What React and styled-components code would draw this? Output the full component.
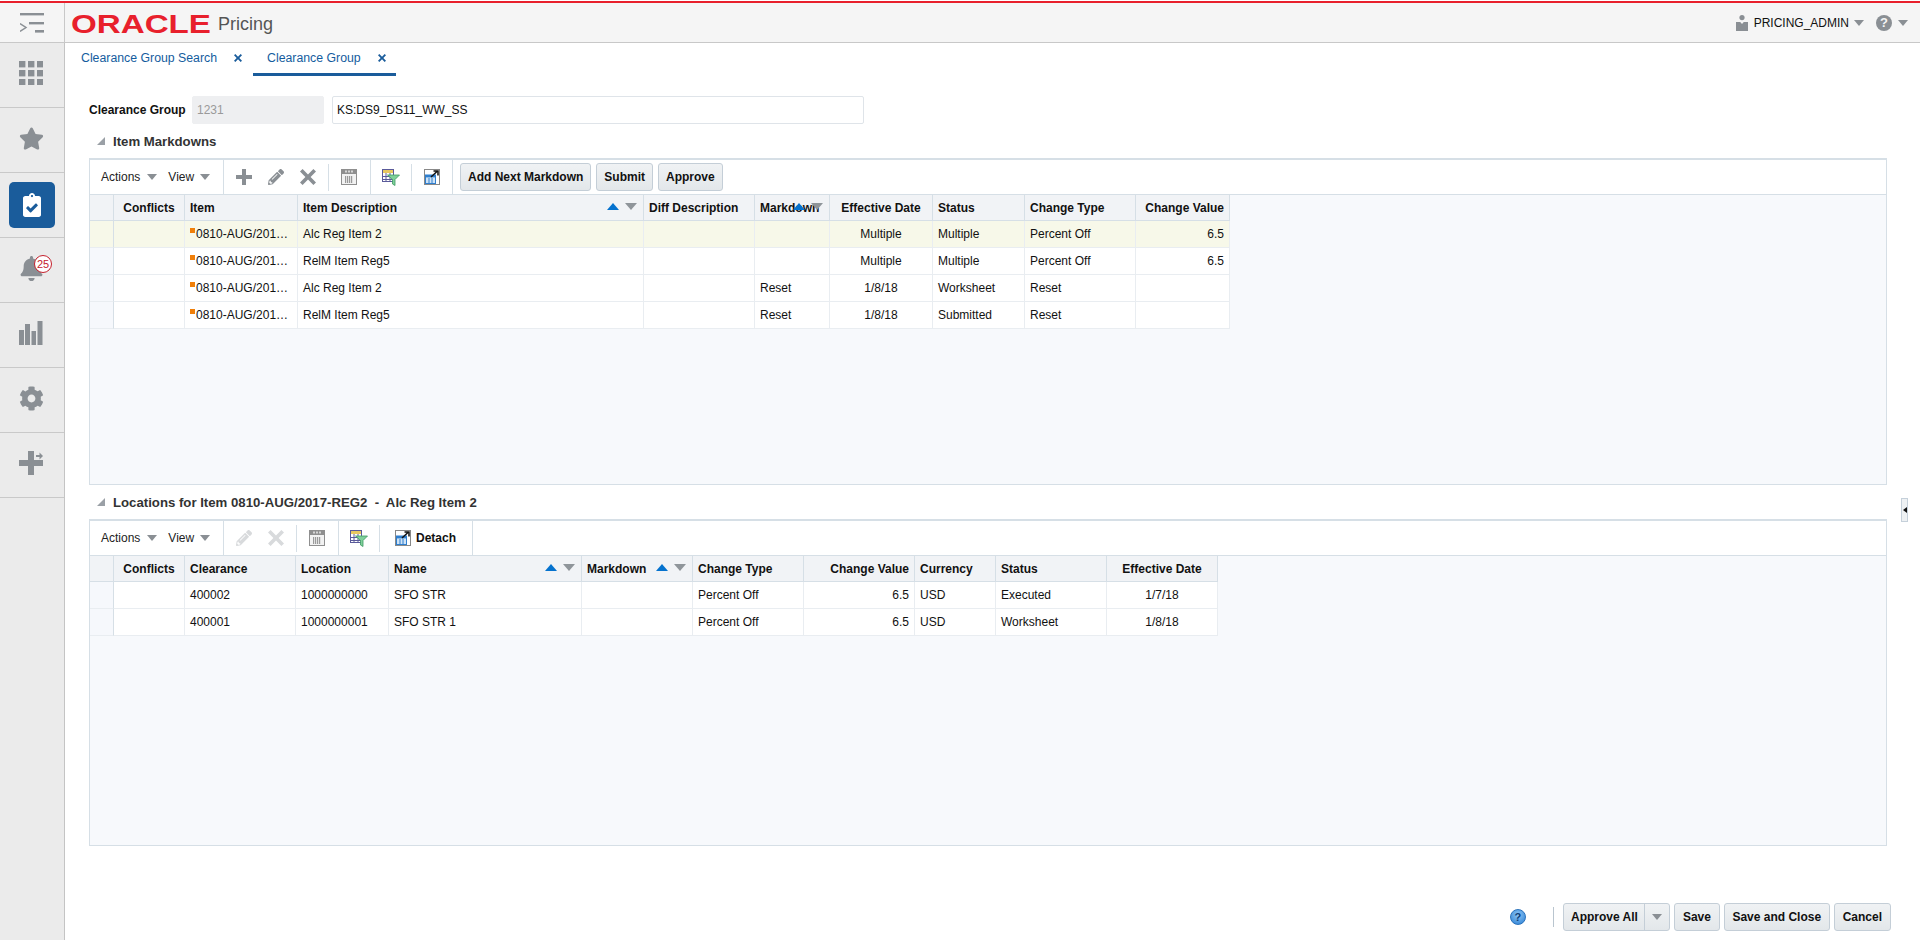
import React from "react";
import styled, { createGlobalStyle } from "styled-components";
import { FaStar, FaBell, FaCog, FaClipboardCheck, FaPencilAlt } from "react-icons/fa";

const GREY = "#8a8f94";

const GlobalStyle = createGlobalStyle`
  html, body { margin: 0; padding: 0; height: 100%; overflow: hidden; background: #fff; }
  body { font-family: "Liberation Sans", Arial, sans-serif; font-size: 12px; color: #111; }
`;

// ---- icons ----
const MenuIcon = () => (
  <svg width="24" height="20" viewBox="0 0 24 20" fill={GREY}>
    <rect x="0" y="0" width="24" height="2.4" />
    <rect x="9" y="9" width="15" height="2.4" />
    <rect x="15" y="17" width="9" height="2.6" />
    <path d="M0 10.5 L6 14.5 L0 18.5" fill="none" stroke={GREY} strokeWidth="1.5" />
  </svg>
);

const UserIcon = () => (
  <svg width="12" height="16" viewBox="0 0 12 16" fill={GREY}>
    <circle cx="6" cy="2.6" r="2.6" />
    <path d="M0 7 H4.2 L6 9 L7.8 7 H12 V16 H0 Z" />
  </svg>
);

const GridIcon = () => (
  <svg width="24" height="24" viewBox="0 0 24 24" fill={GREY}>
    {[0, 9, 18].map((y) =>
      [0, 9, 18].map((x) => <rect key={x + "-" + y} x={x} y={y} width="6.4" height="6.4" />)
    )}
  </svg>
);

const ChartIcon = () => (
  <svg width="24" height="24" viewBox="0 0 24 24" fill={GREY}>
    <rect x="0" y="9" width="5" height="15" />
    <rect x="6" y="3" width="5" height="21" />
    <rect x="12.5" y="10" width="4.5" height="14" />
    <rect x="18.5" y="0" width="5" height="24" />
  </svg>
);

const PlusArrowIcon = () => (
  <svg width="24" height="24" viewBox="0 0 24 24" fill={GREY}>
    <path d="M9 0 H15 V9 H24 V15 H15 V24 H9 V15 H0 V9 H9 Z" />
    <rect x="17" y="4" width="5" height="2" />
    <path d="M20.5 1.5 L24 5 L20.5 8.5 Z" />
  </svg>
);

const PlusIcon = () => (
  <svg width="16" height="16" viewBox="0 0 16 16" fill={GREY}>
    <path d="M6 0 H10 V6 H16 V10 H10 V16 H6 V10 H0 V6 H6 Z" />
  </svg>
);

const CrossIcon = ({ color = GREY, size = 16 }) => (
  <svg width={size} height={size} viewBox="0 0 16 16" fill={color}>
    <path d="M2.6 0 L8 5.4 L13.4 0 L16 2.6 L10.6 8 L16 13.4 L13.4 16 L8 10.6 L2.6 16 L0 13.4 L5.4 8 L0 2.6 Z" />
  </svg>
);

const FreezeIcon = () => (
  <svg width="16" height="16" viewBox="0 0 16 16">
    <rect x="0" y="0" width="16" height="16" fill="#8f8f8f" />
    <rect x="1" y="5" width="14" height="10" fill="#f2f2f2" />
    <rect x="4" y="1.5" width="2" height="2" fill="#d6d6d6" />
    <rect x="7" y="1.5" width="2" height="2" fill="#d6d6d6" />
    <rect x="10" y="1.5" width="2" height="2" fill="#d6d6d6" />
    {[4, 6, 8, 10].map((x) => (
      <rect key={x} x={x} y="7" width="1.2" height="7" fill="#9a9a9a" />
    ))}
  </svg>
);

const FilterIcon = () => (
  <svg width="18" height="17" viewBox="0 0 18 17">
    <rect x="0.5" y="0.5" width="11" height="12" fill="#fff" stroke="#5a5a9a" />
    <rect x="1" y="1" width="10" height="3" fill="#e8c860" />
    <path d="M0.5 7.5 H11.5 M0.5 10.5 H11.5 M4 4 V12.5 M8 4 V12.5" stroke="#5a5a9a" strokeWidth="1" fill="none" />
    <path d="M5.5 6 H17.5 L13 10.5 V16.5 L10.5 15 V10.5 Z" fill="#7fd09a" stroke="#3f9a62" strokeWidth="0.8" />
  </svg>
);

const DetachIcon = () => (
  <svg width="16" height="16" viewBox="0 0 16 16">
    <rect x="0.5" y="0.5" width="15" height="15" fill="#fff" stroke="#111" strokeDasharray="1 1" />
    <rect x="1.5" y="6" width="10" height="8.5" fill="#cfe3f6" stroke="#2f7fcf" />
    <rect x="1.5" y="6" width="10" height="2.4" fill="#2f7fcf" />
    <path d="M5 9 V14 M8 9 V14" stroke="#2f7fcf" strokeWidth="1" />
    <path d="M7 8 L13 2.5 M9.5 2 H14 V6.5" fill="none" stroke="#111" strokeWidth="1.5" />
  </svg>
);

// ---- header ----
const Page = styled.div`
  width: 1920px;
  height: 940px;
  display: flex;
  flex-direction: column;
  overflow: hidden;
`;

const Header = styled.header`
  height: 42px;
  margin-top: 1px;
  box-sizing: border-box;
  flex: none;
  display: flex;
  align-items: stretch;
  background: #f5f5f5;
  border-top: 2px solid #e8202c;
  border-bottom: 1px solid #c8c8c8;
`;

const MenuCell = styled.div`
  width: 65px;
  box-sizing: border-box;
  border-right: 1px solid #c8c8c8;
  display: flex;
  align-items: center;
  justify-content: center;
  padding-right: 1px;
`;

const LogoWrap = styled.div`
  display: flex;
  align-items: center;
  padding-left: 6px;
  gap: 5px;
`;

const ProductName = styled.span`
  font-size: 18px;
  color: #555;
  padding-top: 3px;
`;

const HeaderRight = styled.div`
  margin-left: auto;
  display: flex;
  align-items: center;
  padding-right: 12px;
  font-size: 12px;
  color: #111;
`;

const UserName = styled.span`
  margin-left: 6px;
  margin-right: 5px;
`;

const Caret = styled.i`
  display: inline-block;
  width: 0;
  height: 0;
  border-left: 5px solid transparent;
  border-right: 5px solid transparent;
  border-top: 6px solid ${(p) => p.$color || GREY};
`;

const HelpGlyph = styled.span`
  width: 16px;
  height: 16px;
  border-radius: 50%;
  background: ${GREY};
  color: #f5f5f5;
  font-weight: 700;
  font-size: 13px;
  line-height: 16px;
  text-align: center;
  margin-left: 12px;
  margin-right: 6px;
`;

// ---- sidebar ----
const Body = styled.div`
  flex: 1;
  display: flex;
  min-height: 0;
`;

const Sidebar = styled.nav`
  width: 65px;
  flex: none;
  box-sizing: border-box;
  background: #ebebeb;
  border-right: 1px solid #c4c4c4;
`;

const SideItem = styled.div`
  position: relative;
  height: 65px;
  box-sizing: border-box;
  padding: ${(p) => (p.$flush ? "0 0 1px" : "0 2px 4px 0")};
  border-bottom: 1px solid #c9c9c9;
  display: flex;
  align-items: center;
  justify-content: center;
  color: ${GREY};
`;

const ActiveTile = styled.div`
  width: 46px;
  height: 46px;
  border-radius: 5px;
  background: #1a5c9b;
  color: #fff;
  display: flex;
  align-items: center;
  justify-content: center;
`;

const Badge = styled.span`
  position: absolute;
  left: 34px;
  top: 17px;
  width: 18px;
  height: 18px;
  box-sizing: border-box;
  border-radius: 50%;
  border: 1px solid #c4202c;
  background: #fff;
  color: #c4202c;
  font-size: 11px;
  line-height: 16px;
  text-align: center;
`;

// ---- main ----
const Main = styled.main`
  position: relative;
  flex: 1;
  min-width: 0;
  background: #fff;
`;

const Tabs = styled.div`
  display: flex;
  height: 33px;
  box-sizing: border-box;
  padding-left: 2px;
  gap: 1px;
`;

const Tab = styled.div`
  display: flex;
  align-items: center;
  gap: 17px;
  padding: 0 10px 1px 14px;
  font-size: 12.3px;
  color: #145c9e;
  border-bottom: 3px solid ${(p) => (p.$active ? "#1a5c9b" : "transparent")};
  height: 33px;
  box-sizing: border-box;
`;

const TabClose = styled.span`
  display: flex;
`;

const Content = styled.div`
  padding: 20px 33px 0 24px;
`;

const FormRow = styled.div`
  display: flex;
  align-items: center;
  height: 28px;
`;

const FieldLabel = styled.label`
  font-weight: 700;
  font-size: 12px;
  width: 103px;
  flex: none;
`;

const TextBox = styled.input`
  box-sizing: border-box;
  height: 28px;
  width: ${(p) => p.$width}px;
  margin-right: 8px;
  padding: 0 4px;
  font: 12px "Liberation Sans", Arial, sans-serif;
  color: ${(p) => (p.$off ? "#9a9a9a" : "#111")};
  background: ${(p) => (p.$off ? "#eeeff1" : "#fff")};
  border: 1px solid ${(p) => (p.$off ? "#eeeff1" : "#dfe4e9")};
  border-radius: 2px;
  outline: none;
`;

const SectionHead = styled.div`
  height: 34px;
  display: flex;
  align-items: center;
  padding-left: 8px;
  gap: 8px;
  font-size: 13.2px;
  font-weight: 700;
  color: #333;
`;

const Disclosure = styled.i`
  width: 0;
  height: 0;
  border-left: 8px solid transparent;
  border-bottom: 8px solid #9aa0a6;
`;

const Panel = styled.section`
  height: 327px;
  box-sizing: border-box;
  background: #f7f9fc;
  border: 1px solid #d6dfe6;
  border-top-width: 2px;
`;

const Toolbar = styled.div`
  height: 35px;
  box-sizing: border-box;
  background: #fff;
  border-bottom: 1px solid #d6dfe6;
  display: flex;
  align-items: stretch;
`;

const ToolGroup = styled.div`
  display: flex;
  align-items: center;
  box-sizing: border-box;
  padding: ${(p) => p.$pad || "0 4px"};
  border-right: 1px solid #d6dfe6;
`;

const ViewGroup = styled(ToolGroup)`
  width: 134px;
  flex: none;
  padding: 0 0 0 11px;
`;

const MenuLabel = styled.span`
  color: #222;
  margin-left: ${(p) => p.$left || 0}px;
  margin-right: ${(p) => p.$gap}px;
`;

const IconCell = styled.span`
  width: 32px;
  height: 28px;
  display: flex;
  align-items: center;
  justify-content: center;
  color: ${(p) => (p.$off ? "#d8dadc" : GREY)};
`;

const ShortSep = styled.i`
  width: 1px;
  height: 27px;
  margin: 0 4px;
  background: #d6dfe6;
`;

const DetachBtn = styled.span`
  display: flex;
  align-items: center;
  gap: 5px;
  font-weight: 700;
  padding: 0 12px 0 11px;
`;

const ButtonRow = styled.div`
  display: flex;
  align-items: center;
  gap: 5px;
  padding-left: 7px;
`;

const Button = styled.button`
  height: 28px;
  box-sizing: border-box;
  padding: 0 ${(p) => p.$pad || 7}px;
  font: 700 12px "Liberation Sans", Arial, sans-serif;
  color: #111;
  background: linear-gradient(#f0f2f4, #e3e7ea);
  border: 1px solid #c4ced7;
  border-radius: 3px;
  display: flex;
  align-items: center;
`;

const SplitCaret = styled.span`
  margin-left: 6px;
  padding-left: 7px;
  height: 26px;
  display: flex;
  align-items: center;
  border-left: 1px solid #c4ced7;
`;

const Grid = styled.table`
  table-layout: fixed;
  border-collapse: separate;
  border-spacing: 0;
  width: ${(p) => p.$width}px;
`;

const Th = styled.th`
  position: relative;
  height: 26px;
  box-sizing: border-box;
  padding: 0 5px;
  background: #f1f3f6;
  border-right: 1px solid #d6dfe6;
  border-bottom: 1px solid #d6dfe6;
  font-weight: 700;
  font-size: 12px;
  color: #111;
  text-align: ${(p) => p.$align || "left"};
  white-space: nowrap;
  overflow: hidden;
`;

const Td = styled.td`
  height: 27px;
  box-sizing: border-box;
  padding: 0 5px;
  background: ${(p) => (p.$selected ? "#f7f8e9" : p.$gutter ? "#f6f8fc" : "#fff")};
  border-right: 1px solid ${(p) => (p.$gutter ? "#d6dfe6" : "#e9edf1")};
  border-bottom: 1px solid #e9edf1;
  text-align: ${(p) => p.$align || "left"};
  white-space: nowrap;
  overflow: hidden;
  text-overflow: ellipsis;
`;

const ChangeMark = styled.i`
  display: inline-block;
  width: 5px;
  height: 5px;
  margin-right: 1px;
  vertical-align: 5px;
  background: #f07f09;
`;

const SortArrows = styled.span`
  position: absolute;
  right: 6px;
  top: 8px;
  display: flex;
  gap: 6px;
`;

const Arrow = styled.i`
  width: 0;
  height: 0;
  border-left: 6px solid transparent;
  border-right: 6px solid transparent;
  ${(p) => (p.$up ? "border-bottom: 7px solid #0572ce;" : "border-top: 7px solid #8f959a;")}
`;

const Splitter = styled.div`
  position: absolute;
  left: 1836px;
  top: 455px;
  width: 7px;
  height: 24px;
  box-sizing: border-box;
  background: #eef1f3;
  border: 1px solid #c5d0da;
  display: flex;
  align-items: center;
  justify-content: center;
  &::before {
    content: "";
    border-top: 3px solid transparent;
    border-bottom: 3px solid transparent;
    border-right: 4px solid #111;
  }
`;

const Footer = styled.div`
  display: flex;
  justify-content: flex-end;
  align-items: center;
  height: 28px;
  margin-top: 57px;
  margin-right: -4px;
  gap: 4px;
`;

const HelpDot = styled.span`
  width: 16px;
  height: 16px;
  border-radius: 50%;
  background: radial-gradient(circle at 50% 35%, #8cc4f4, #2a7fd4);
  border: 1px solid #2a72bc;
  box-sizing: border-box;
  color: #0c3e78;
  font-weight: 700;
  font-size: 11px;
  line-height: 14px;
  text-align: center;
`;

const FootDivider = styled.i`
  width: 1px;
  height: 20px;
  background: #b9c5cf;
  margin: 0 5px 0 23px;
`;

const markdownCols = [
  { w: 24 },
  { w: 71, t: "Conflicts", h: "center" },
  { w: 113, t: "Item" },
  { w: 346, t: "Item Description", sort: true },
  { w: 111, t: "Diff Description" },
  { w: 75, t: "Markdown", sort: true },
  { w: 103, t: "Effective Date", h: "center", c: "center" },
  { w: 92, t: "Status" },
  { w: 111, t: "Change Type" },
  { w: 94, t: "Change Value", h: "right", c: "right" },
];

const markdownRows = [
  ["", "", "0810-AUG/2017-REG2", "Alc Reg Item 2", "", "", "Multiple", "Multiple", "Percent Off", "6.5"],
  ["", "", "0810-AUG/2017-REG5", "RelM Item Reg5", "", "", "Multiple", "Multiple", "Percent Off", "6.5"],
  ["", "", "0810-AUG/2017-REG2", "Alc Reg Item 2", "", "Reset", "1/8/18", "Worksheet", "Reset", ""],
  ["", "", "0810-AUG/2017-REG5", "RelM Item Reg5", "", "Reset", "1/8/18", "Submitted", "Reset", ""],
];

const locationCols = [
  { w: 24 },
  { w: 71, t: "Conflicts", h: "center" },
  { w: 111, t: "Clearance" },
  { w: 93, t: "Location" },
  { w: 193, t: "Name", sort: true },
  { w: 111, t: "Markdown", sort: true },
  { w: 111, t: "Change Type" },
  { w: 111, t: "Change Value", h: "right", c: "right" },
  { w: 81, t: "Currency" },
  { w: 111, t: "Status" },
  { w: 111, t: "Effective Date", h: "center", c: "center" },
];

const locationRows = [
  ["", "", "400002", "1000000000", "SFO STR", "", "Percent Off", "6.5", "USD", "Executed", "1/7/18"],
  ["", "", "400001", "1000000001", "SFO STR 1", "", "Percent Off", "6.5", "USD", "Worksheet", "1/8/18"],
];

function DataGrid({ cols, rows, selected, markCol }) {
  const width = cols.reduce((sum, c) => sum + c.w, 0);
  return (
    <Grid $width={width}>
      <colgroup>
        {cols.map((c, i) => (
          <col key={i} width={c.w} />
        ))}
      </colgroup>
      <thead>
        <tr>
          {cols.map((c, i) => (
            <Th key={i} $align={c.h}>
              {c.t}
              {c.sort && (
                <SortArrows>
                  <Arrow $up />
                  <Arrow />
                </SortArrows>
              )}
            </Th>
          ))}
        </tr>
      </thead>
      <tbody>
        {rows.map((row, r) => (
          <tr key={r}>
            {row.map((val, i) => (
              <Td key={i} $align={cols[i].c} $gutter={i === 0} $selected={selected === r}>
                {i === markCol && <ChangeMark />}
                {val}
              </Td>
            ))}
          </tr>
        ))}
      </tbody>
    </Grid>
  );
}

function ViewMenu() {
  return (
    <ViewGroup>
      <MenuLabel $gap={7}>Actions</MenuLabel>
      <Caret />
      <MenuLabel $left={11} $gap={6}>View</MenuLabel>
      <Caret />
    </ViewGroup>
  );
}

function App() {
  return (
    <Page>
      <GlobalStyle />
      <Header>
        <MenuCell>
          <MenuIcon />
        </MenuCell>
        <LogoWrap>
          <svg width="142" height="32" viewBox="0 0 142 32">
            <text
              x="0"
              y="26"
              textLength="140"
              lengthAdjust="spacingAndGlyphs"
              fontFamily="Liberation Sans"
              fontWeight="700"
              fontSize="25"
              fill="#e8202c"
            >
              ORACLE
            </text>
          </svg>
          <ProductName>Pricing</ProductName>
        </LogoWrap>
        <HeaderRight>
          <UserIcon />
          <UserName>PRICING_ADMIN</UserName>
          <Caret />
          <HelpGlyph>?</HelpGlyph>
          <Caret />
        </HeaderRight>
      </Header>
      <Body>
        <Sidebar>
          <SideItem>
            <GridIcon />
          </SideItem>
          <SideItem>
            <FaStar size={25} />
          </SideItem>
          <SideItem $flush>
            <ActiveTile>
              <FaClipboardCheck size={24} />
            </ActiveTile>
          </SideItem>
          <SideItem>
            <FaBell size={25} />
            <Badge>25</Badge>
          </SideItem>
          <SideItem>
            <ChartIcon />
          </SideItem>
          <SideItem>
            <FaCog size={25} />
          </SideItem>
          <SideItem>
            <PlusArrowIcon />
          </SideItem>
        </Sidebar>
        <Main>
          <Tabs>
            <Tab>
              Clearance Group Search
              <TabClose>
                <CrossIcon color="#1a5c9b" size={8} />
              </TabClose>
            </Tab>
            <Tab $active>
              Clearance Group
              <TabClose>
                <CrossIcon color="#1a5c9b" size={8} />
              </TabClose>
            </Tab>
          </Tabs>
          <Content>
            <FormRow>
              <FieldLabel>Clearance Group</FieldLabel>
              <TextBox $width={132} $off readOnly defaultValue="1231" />
              <TextBox $width={532} readOnly defaultValue="KS:DS9_DS11_WW_SS" />
            </FormRow>
            <SectionHead>
              <Disclosure />
              Item Markdowns
            </SectionHead>
            <Panel>
              <Toolbar>
                <ViewMenu />
                <ToolGroup $pad="0 5px 0 4px">
                  <IconCell>
                    <PlusIcon />
                  </IconCell>
                  <IconCell>
                    <FaPencilAlt size={16} />
                  </IconCell>
                  <IconCell>
                    <CrossIcon />
                  </IconCell>
                  <ShortSep />
                  <IconCell>
                    <FreezeIcon />
                  </IconCell>
                </ToolGroup>
                <ToolGroup>
                  <IconCell>
                    <FilterIcon />
                  </IconCell>
                  <ShortSep />
                  <IconCell>
                    <DetachIcon />
                  </IconCell>
                </ToolGroup>
                <ButtonRow>
                  <Button>Add Next Markdown</Button>
                  <Button>Submit</Button>
                  <Button>Approve</Button>
                </ButtonRow>
              </Toolbar>
              <DataGrid cols={markdownCols} rows={markdownRows} selected={0} markCol={2} />
            </Panel>
            <SectionHead>
              <Disclosure />
              Locations for Item 0810-AUG/2017-REG2 &nbsp;-&nbsp; Alc Reg Item 2
            </SectionHead>
            <Panel>
              <Toolbar>
                <ViewMenu />
                <ToolGroup $pad="0 5px 0 4px">
                  <IconCell $off>
                    <FaPencilAlt size={16} />
                  </IconCell>
                  <IconCell $off>
                    <CrossIcon color="#d8dadc" />
                  </IconCell>
                  <ShortSep />
                  <IconCell>
                    <FreezeIcon />
                  </IconCell>
                </ToolGroup>
                <ToolGroup>
                  <IconCell>
                    <FilterIcon />
                  </IconCell>
                  <ShortSep />
                  <DetachBtn>
                    <DetachIcon />
                    Detach
                  </DetachBtn>
                </ToolGroup>
              </Toolbar>
              <DataGrid cols={locationCols} rows={locationRows} />
            </Panel>
            <Footer>
              <HelpDot>?</HelpDot>
              <FootDivider />
              <Button $pad={7}>
                Approve All
                <SplitCaret>
                  <Caret />
                </SplitCaret>
              </Button>
              <Button $pad={8}>Save</Button>
              <Button $pad={7.5}>Save and Close</Button>
              <Button $pad={8}>Cancel</Button>
            </Footer>
          </Content>
          <Splitter />
        </Main>
      </Body>
    </Page>
  );
}

export default App;
